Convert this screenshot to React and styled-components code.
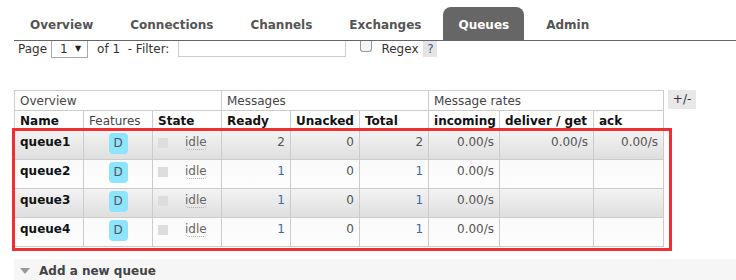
import React from 'react';
import styled, { createGlobalStyle } from 'styled-components';

const GlobalStyle = createGlobalStyle`
  body {
    margin: 0;
    background: #fff;
    font-family: "DejaVu Sans", Verdana, sans-serif;
    font-size: 12px;
    color: #444;
  }
`;

const tabs = ['Overview', 'Connections', 'Channels', 'Exchanges', 'Queues', 'Admin'];

const queues = [
  { name: 'queue1', ready: 2, unacked: 0, total: 2, incoming: '0.00/s', deliver: '0.00/s', ack: '0.00/s' },
  { name: 'queue2', ready: 1, unacked: 0, total: 1, incoming: '0.00/s', deliver: '', ack: '' },
  { name: 'queue3', ready: 1, unacked: 0, total: 1, incoming: '0.00/s', deliver: '', ack: '' },
  { name: 'queue4', ready: 1, unacked: 0, total: 1, incoming: '0.00/s', deliver: '', ack: '' },
];

const colWidths = [69, 69, 69, 69, 69, 69, 71, 94, 70];

const App = () => {
  return (
    <Page>
      <GlobalStyle />
      <TabBar>
        {tabs.map((t) => (
          <Tab key={t} $active={t === 'Queues'}>
            {t}
          </Tab>
        ))}
      </TabBar>

      <Controls>
        <span>Page</span>
        <Select>
          <span>1</span>
          <Arrow>▼</Arrow>
        </Select>
        <span>of 1&nbsp; - Filter:</span>
        <FilterInput />
        <CheckBox />
        <span>Regex</span>
        <Help>?</Help>
      </Controls>

      <TableArea>
        <Table>
          <colgroup>
            {colWidths.map((w, i) => (
              <col key={i} style={{ width: w }} />
            ))}
          </colgroup>
          <thead>
            <tr>
              <GroupTh colSpan={3}>Overview</GroupTh>
              <GroupTh colSpan={3}>Messages</GroupTh>
              <GroupTh colSpan={3}>Message rates</GroupTh>
            </tr>
            <tr>
              <Th>Name</Th>
              <Th $plain>Features</Th>
              <Th>State</Th>
              <Th>Ready</Th>
              <Th>Unacked</Th>
              <Th>Total</Th>
              <Th>incoming</Th>
              <Th>deliver / get</Th>
              <Th>ack</Th>
            </tr>
          </thead>
          <tbody>
            {queues.map((q, i) => (
              <Row key={q.name} $alt={i % 2 === 0}>
                <NameCell>{q.name}</NameCell>
                <FeatureCell>
                  <Badge>D</Badge>
                </FeatureCell>
                <Td>
                  <StateWrap>
                    <StateBox />
                    <Idle>idle</Idle>
                  </StateWrap>
                </Td>
                <Num $blue={q.ready === 1}>{q.ready}</Num>
                <Num>{q.unacked}</Num>
                <Num $blue={q.total === 1}>{q.total}</Num>
                <Num>{q.incoming}</Num>
                <Num>{q.deliver}</Num>
                <Num>{q.ack}</Num>
              </Row>
            ))}
          </tbody>
        </Table>
        <Toggle>+/-</Toggle>
        <Highlight />
      </TableArea>

      <Section>
        <Triangle />
        <SectionTitle>Add a new queue</SectionTitle>
      </Section>
    </Page>
  );
};

const Page = styled.div`
  padding: 7px 0 0 14px;
`;

const TabBar = styled.div`
  display: flex;
  align-items: flex-end;
  height: 33px;
  border-bottom: 1px solid #666;
  padding-left: 1px;
`;

const Tab = styled.div`
  box-sizing: border-box;
  height: 33px;
  padding: 3px 15px 0;
  margin-right: 7px;
  display: flex;
  align-items: center;
  font-weight: bold;
  font-size: 12px;
  color: ${(p) => (p.$active ? '#fff' : '#555')};
  background: ${(p) => (p.$active ? '#666' : 'transparent')};
  border-radius: 8px 8px 0 0;
`;

const Controls = styled.div`
  display: flex;
  align-items: flex-start;
  height: 16px;
  padding-left: 4px;
  color: #333;
  line-height: 16px;
`;

const Select = styled.div`
  display: flex;
  justify-content: space-between;
  align-items: center;
  box-sizing: border-box;
  width: 37px;
  height: 17px;
  margin: 0 9px 0 4px;
  padding: 0 6px 0 8px;
  border: 1px solid #a9a9a9;
  border-top: none;
`;

const Arrow = styled.span`
  font-size: 8px;
  color: #222;
`;

const FilterInput = styled.div`
  box-sizing: border-box;
  width: 168px;
  height: 16px;
  margin: 0 14px 0 9px;
  border: 1px solid #ccc;
  border-top: none;
`;

const CheckBox = styled.div`
  box-sizing: border-box;
  width: 12px;
  height: 11px;
  margin: 0 9px 0 0;
  border: 1px solid #999;
  border-top: none;
  border-radius: 0 0 3px 3px;
  background: #f4f4f4;
`;

const Help = styled.div`
  width: 14px;
  height: 16px;
  margin-left: 5px;
  background: #e4e4e4;
  color: #3d5a80;
  text-align: center;
`;

const TableArea = styled.div`
  position: relative;
  display: flex;
  align-items: flex-start;
  gap: 4px;
  margin-top: 33px;
`;

const Table = styled.table`
  border-collapse: collapse;
  table-layout: fixed;
  width: 649px;
  font-size: 12px;
`;

const GroupTh = styled.th`
  height: 19px;
  padding: 0 5px;
  border: 1px solid #ccc;
  text-align: left;
  font-weight: normal;
  color: #444;
  background: #fff;
`;

const Th = styled.th`
  height: 19px;
  padding: 0 5px;
  border: 1px solid #ccc;
  text-align: left;
  font-weight: ${(p) => (p.$plain ? 'normal' : 'bold')};
  color: ${(p) => (p.$plain ? '#444' : '#111')};
  white-space: nowrap;
  background: #fff;
`;

const Row = styled.tr`
  height: 29px;
  background: ${(p) =>
    p.$alt ? 'linear-gradient(#f3f3f3, #dedede)' : 'linear-gradient(#fafafa, #fdfdfd)'};
`;

const Td = styled.td`
  border: 1px solid #ccc;
  padding: 3px 5px 0;
  vertical-align: top;
  line-height: 16px;
  color: #555;
`;

const NameCell = styled(Td)`
  font-weight: bold;
  color: #111;
`;

const FeatureCell = styled(Td)`
  padding-top: 2px;
  text-align: center;
`;

const Badge = styled.span`
  display: inline-block;
  width: 19px;
  height: 21px;
  line-height: 21px;
  border-radius: 4px;
  background: #8de4fd;
  color: #555;
  text-align: center;
`;

const StateWrap = styled.div`
  display: flex;
  align-items: center;
  gap: 17px;
  padding-top: 1px;
`;

const StateBox = styled.span`
  width: 10px;
  height: 10px;
  background: #ddd;
`;

const Idle = styled.span`
  color: #666;
  line-height: 14px;
  border-bottom: 1px dotted #aaa;
  border-radius: 0 0 4px 4px;
`;

const Num = styled(Td)`
  text-align: right;
  color: ${(p) => (p.$blue ? '#3a6aa0' : '#555')};
`;

const Toggle = styled.div`
  width: 28px;
  height: 19px;
  line-height: 19px;
  background: #e8e8e8;
  color: #333;
  text-align: center;
`;

const Highlight = styled.div`
  position: absolute;
  left: -2px;
  top: 38px;
  width: 660px;
  height: 123px;
  box-sizing: border-box;
  border: 3px solid #ee3030;
  pointer-events: none;
`;

const Section = styled.div`
  display: flex;
  align-items: center;
  gap: 9px;
  height: 24px;
  margin-top: 12px;
  padding-left: 6px;
  background: #f6f6f6;
`;

const Triangle = styled.span`
  width: 0;
  height: 0;
  border-left: 5px solid transparent;
  border-right: 5px solid transparent;
  border-top: 6px solid #999;
`;

const SectionTitle = styled.span`
  font-weight: bold;
  font-size: 12px;
  color: #444;
`;

export default App;
